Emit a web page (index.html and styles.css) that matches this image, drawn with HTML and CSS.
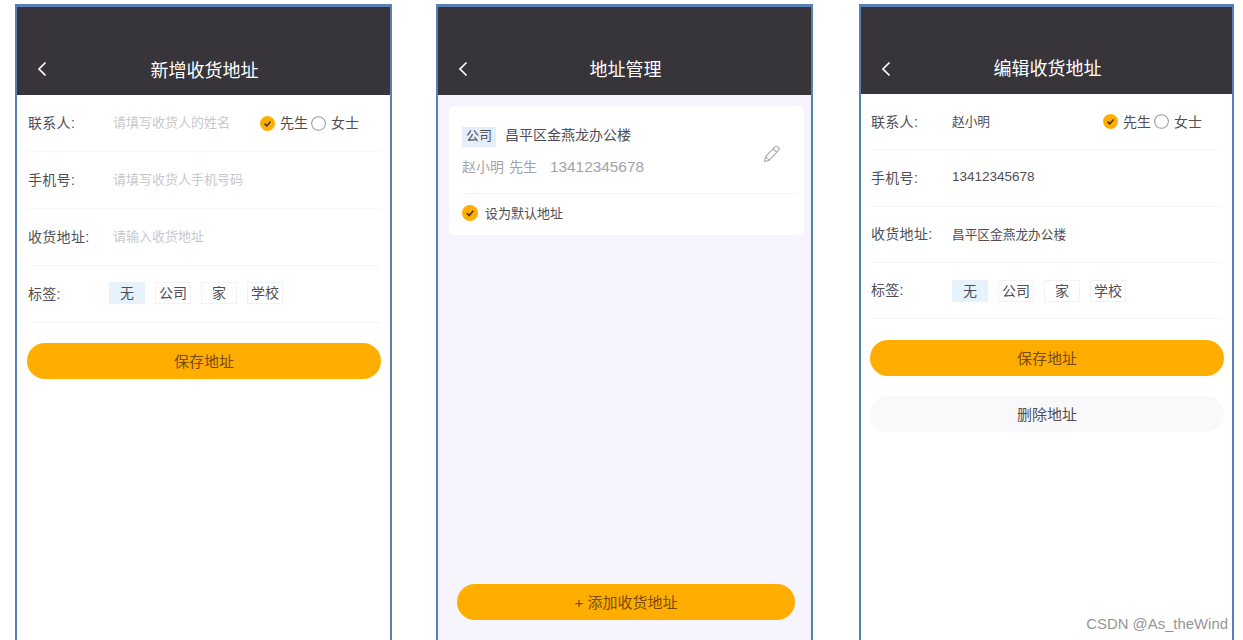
FILE: index.html
```html
<!doctype html>
<html lang="zh-CN">
  <head>
    <meta charset="UTF-8" />
    <meta name="viewport" content="width=device-width, initial-scale=1.0" />
    <title>收货地址</title>
    <link rel="stylesheet" href="styles.css">
  </head>
  <body>
    <svg class="defs" width="0" height="0">
      <symbol id="back" viewBox="0 0 10 16">
        <path d="M8.5 1.5 2 8l6.5 6.5" fill="none" stroke="currentColor" stroke-width="1.7" />
      </symbol>
      <symbol id="checked" viewBox="0 0 16 16">
        <circle cx="8" cy="8" r="8" fill="#ffae00" />
        <path d="M4.8 8.2 7.2 10.6 11.2 5.8" fill="none" stroke="#4a3520" stroke-width="1.7" />
      </symbol>
      <symbol id="unchecked" viewBox="0 0 16 16">
        <circle cx="8" cy="8" r="7.3" fill="none" stroke="#999" stroke-width="1.1" />
      </symbol>
      <symbol id="pencil" viewBox="0 0 20 20">
        <path d="M2.5 17.5 3.6 12.6 12.6 3.2a2.4 2.4 0 0 1 3.7 3.5L7.3 16.2ZM3.6 12.6 7.3 16.2M11.2 4.8 14.8 8.3" fill="none" stroke="#aaa" stroke-width="1.1" />
      </symbol>
    </svg>

    <!-- add -->
    <section class="phone">
      <header class="bar">
        <svg class="back"><use href="#back" /></svg>
        <h1>新增收货地址</h1>
      </header>
      <div class="row">
        <span class="label">联系人:</span>
        <span class="hint">请填写收货人的姓名</span>
        <span class="gender">
          <svg class="tick"><use href="#checked" /></svg>先生
          <svg class="tick tick-off"><use href="#unchecked" /></svg>女士
        </span>
      </div>
      <div class="row">
        <span class="label">手机号:</span>
        <span class="hint">请填写收货人手机号码</span>
      </div>
      <div class="row">
        <span class="label">收货地址:</span>
        <span class="hint">请输入收货地址</span>
      </div>
      <div class="row">
        <span class="label">标签:</span>
        <span class="tags">
          <span class="tag tag-on">无</span>
          <span class="tag">公司</span>
          <span class="tag">家</span>
          <span class="tag">学校</span>
        </span>
      </div>
      <button class="btn" type="button">保存地址</button>
    </section>

    <!-- list -->
    <section class="phone phone-list">
      <header class="bar">
        <svg class="back"><use href="#back" /></svg>
        <h1>地址管理</h1>
      </header>
      <div class="card">
        <div class="card-main">
          <div class="card-text">
            <div class="card-addr"><span class="badge">公司</span>昌平区金燕龙办公楼</div>
            <div class="card-person">赵小明 先生<span class="card-tel">13412345678</span></div>
          </div>
          <svg class="edit"><use href="#pencil" /></svg>
        </div>
        <div class="card-foot">
          <svg class="tick"><use href="#checked" /></svg>设为默认地址
        </div>
      </div>
      <button class="btn btn-add" type="button">+ 添加收货地址</button>
    </section>

    <!-- edit -->
    <section class="phone phone-edit">
      <header class="bar">
        <svg class="back"><use href="#back" /></svg>
        <h1>编辑收货地址</h1>
      </header>
      <div class="row">
        <span class="label">联系人:</span>
        <span class="value">赵小明</span>
        <span class="gender">
          <svg class="tick"><use href="#checked" /></svg>先生
          <svg class="tick tick-off"><use href="#unchecked" /></svg>女士
        </span>
      </div>
      <div class="row">
        <span class="label">手机号:</span>
        <span class="value value-num">13412345678</span>
      </div>
      <div class="row">
        <span class="label">收货地址:</span>
        <span class="value">昌平区金燕龙办公楼</span>
      </div>
      <div class="row">
        <span class="label">标签:</span>
        <span class="tags">
          <span class="tag tag-on">无</span>
          <span class="tag">公司</span>
          <span class="tag">家</span>
          <span class="tag">学校</span>
        </span>
      </div>
      <button class="btn" type="button">保存地址</button>
      <button class="btn btn-del" type="button">删除地址</button>
    </section>

    <div class="mark">CSDN @As_theWind</div>
  </body>
</html>
```

FILE: styles.css
```css
html,
body {
  height: 640px;
  overflow: hidden;
}
body {
  position: relative;
  display: flex;
  align-items: flex-start;
  margin: 0;
  padding: 4px 0 0 15px;
  box-sizing: border-box;
  background: #fff;
  color: #504e54;
  font-family: "Liberation Sans", "Noto Sans CJK SC", sans-serif;
  font-size: 14px;
}
.defs {
  position: absolute;
}
.phone {
  display: flex;
  flex-direction: column;
  flex: none;
  width: 377px;
  height: 660px;
  box-sizing: border-box;
  border: 2px solid #5a7fb5;
  border-top-width: 3px;
  background: #fff;
}
.phone-list {
  margin-left: 44px;
  background: #f6f4fd;
}
.phone-edit {
  width: 375px;
  margin-left: 46px;
}
.bar {
  display: flex;
  align-items: center;
  position: relative;
  justify-content: center;
  height: 88px;
  padding: 40px 0 0 2px;
  box-sizing: border-box;
  background: #37343a;
  color: #fff;
}
.phone-edit .bar {
  height: 87px;
  padding-top: 37px;
}
.bar h1 {
  margin: 0;
  font-size: 18px;
  font-weight: 400;
  line-height: 26px;
}
.back {
  position: absolute;
  left: 20px;
  top: 54px;
  width: 10px;
  height: 16px;
}
.phone-list .bar {
  padding-top: 38px;
}
.row {
  display: flex;
  align-items: center;
  height: 57px;
  margin: 0 10px 0 11px;
  padding-bottom: 3px;
  box-sizing: border-box;
  border-bottom: 1px solid #f6f6f8;
}
.phone-edit .row {
  height: 56.25px;
  margin-left: 10px;
  padding-bottom: 2px;
}
.label {
  flex: none;
  width: 81px;
  letter-spacing: 0.3px;
}
.hint {
  padding-left: 4px;
  color: #c8c8cc;
  font-size: 13px;
}
.value {
  font-size: 12.7px;
}
.value-num {
  font-size: 13.5px;
}
.gender {
  display: flex;
  align-items: center;
  margin-left: auto;
  margin-right: 21px;
}
.phone-edit .gender {
  margin-right: 20px;
}
.tick {
  flex: none;
  width: 15px;
  height: 15px;
  margin-top: 4px;
  margin-right: 5px;
}
.phone-edit .tick {
  margin-top: 2px;
}
.tick-off {
  margin-left: 3px;
}
.tags {
  display: flex;
  gap: 10px;
}
.phone-edit .tags {
  margin-top: 4px;
}
.tag {
  width: 36px;
  height: 22px;
  box-sizing: border-box;
  border: 1px solid #f2f2f4;
  text-align: center;
  line-height: 20px;
}
.tag-on {
  border-color: #e6f3fc;
  background: #e6f3fc;
}
.btn {
  display: block;
  height: 36px;
  margin: 20px 9px 0 10px;
  padding-bottom: 3px;
  border: none;
  border-radius: 18px;
  background: #ffae00;
  color: #7a4a10;
  font-family: inherit;
  font-size: 15px;
}
.phone-edit .btn {
  margin: 21px 8px 0 9px;
}
.phone-edit .btn-del {
  margin-top: 20px;
  background: #f9f8fb;
  color: #504e54;
}
.btn-add {
  margin: 0 16px 0 19px;
  position: relative;
  top: 349px;
}
.card {
  margin: 11px 7px 0 11px;
  height: 129px;
  padding: 0 7px 0 13px;
  box-sizing: border-box;
  border-radius: 6px;
  background: #fff;
}
.card-main {
  display: flex;
  align-items: center;
  justify-content: space-between;
  height: 88px;
  padding-right: 15px;
  box-sizing: border-box;
  border-bottom: 1px solid #f4f4f6;
}
.card-addr {
  display: flex;
  align-items: flex-start;
  height: 20px;
  margin-top: 4px;
  line-height: 17px;
}
.badge {
  width: 34px;
  height: 20px;
  margin-right: 9px;
  background: #e4eefb;
  font-size: 13px;
  line-height: 18px;
  text-align: center;
}
.card-person {
  margin-top: 10px;
  color: #a3a3a8;
  line-height: 20px;
  word-spacing: 1px;
}
.card-tel {
  margin-left: 13px;
  font-size: 15.4px;
}
.edit {
  width: 20px;
  height: 20px;
  margin-top: 8px;
}
.card-foot {
  display: flex;
  align-items: center;
  height: 40px;
  padding-bottom: 3px;
  box-sizing: border-box;
  font-size: 13px;
}
.card-foot .tick {
  margin: 0 7px 0 0;
  width: 16px;
  height: 16px;
}
.mark {
  position: absolute;
  right: 15px;
  bottom: 8px;
  color: #969696;
  font-size: 14.9px;
}
```
